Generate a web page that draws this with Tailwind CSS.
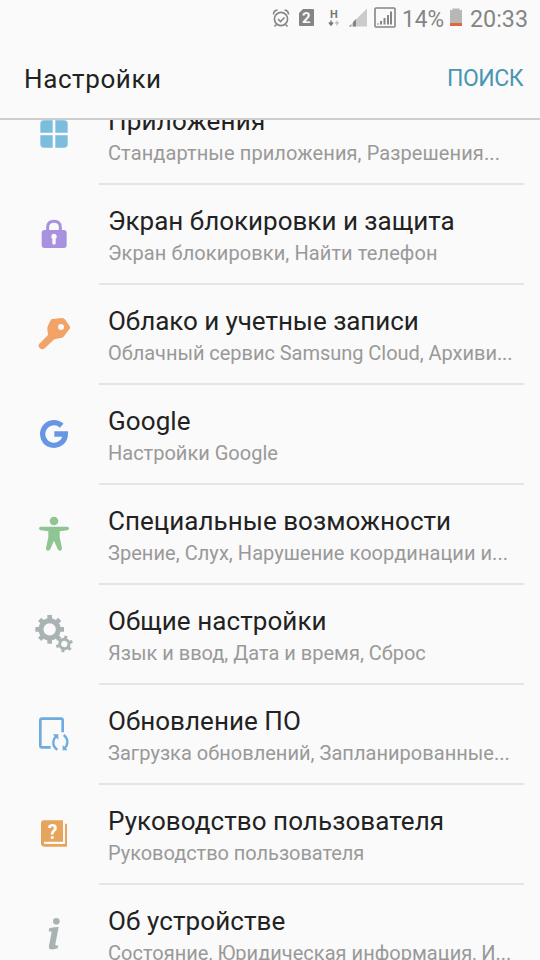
<!DOCTYPE html>
<html lang="ru">
<head>
<meta charset="utf-8">
<title>Настройки</title>
<script src="https://cdn.jsdelivr.net/npm/@tailwindcss/browser@4"></script>
</head>
<body class="flex h-[960px] w-[540px] flex-col overflow-hidden bg-[#fafafa] font-[Roboto,sans-serif] text-[#222]">
<div class="h-10 shrink-0">
<svg class="block h-10 w-[540px]" viewBox="0 0 540 40" fill="none">
  <g stroke="#858585" stroke-width="1.6"><circle cx="281" cy="19" r="6.6"/><path d="M278 19l2.5 2.5 4-4M276.5 24.5l-2 2M285.500 24.500l2 2M273.500 14.500q0-4 4-4.500M288.500 14.500q0-4-4-4.500"/></g>
  <path d="M303 9h10q1 0 1 1v15q0 1-1 1h-13q-1 0-1-1V13z" fill="#858585"/>
  <text x="302" y="23" font-size="15" font-weight="700" fill="#fafafa">2</text>
  <text x="330" y="17.500" font-size="11" font-weight="700" fill="#777">H</text>
  <path d="M331 20.500v3.500M329 22.500l2 2.500 2-2.500" stroke="#777" stroke-width="1.500"/>
  <path d="M337 25.500V22M335.300 23.500l1.700-2 1.700 2" stroke="#c4c4c4" stroke-width="1.300"/>
  <path d="M349 26.500L367 8.500v18z" fill="#cbcbcb"/><path d="M349 26.500l2-2v2zM353 26.500v-4.500l3-3v7.500z" fill="#858585"/>
  <rect x="375" y="8" width="20" height="19" rx="1" stroke="#858585" stroke-width="1.600"/>
  <path d="M378 24.500v-1M381 24.500v-3.500M384.500 24.500V18M388 24.500V15M391 24.500V11.500" stroke="#858585" stroke-width="2"/>
  <text x="402" y="27" font-size="24" fill="#858585" textLength="42" lengthAdjust="spacingAndGlyphs">14%</text>
  <path d="M450 10h2.500V8.500h7V10h2.500v16h-12z" fill="#b7b7b7"/><path d="M450 23h12v3h-12z" fill="#e2673f"/>
  <text x="470" y="27" font-size="24" fill="#858585" textLength="58" lengthAdjust="spacingAndGlyphs">20:33</text>
</svg>
</div>
<header class="flex h-20 shrink-0 items-center justify-between border-b-2 border-[#cecece] pr-[17px] pl-6">
  <h1 class="text-[26px] leading-[30px] tracking-[0.6px]">Настройки</h1>
  <button class="text-[23px] leading-[30px] tracking-[-0.5px] text-[#4896b3]">ПОИСК</button>
</header>
<main class="min-h-0 grow overflow-hidden">
<div class="-mt-[35px]">
  <section class="flex h-[100px] pl-6">
    <svg class="mt-[25px] h-[50px] w-[60px] shrink-0" viewBox="0 0 180 150" fill="#7cbcdd"><path d="M60 31h26v37H49V42q0-11 11-11zM94 31h26q11 0 11 11v26H94zM49 76h37v37H60q-11 0-11-11zM94 76h37v26q0 11-11 11H94z"/></svg>
    <div class="ml-[15px] w-[425px] border-b-2 border-[#e4e4e4] pt-5 pl-[9px]"><h2 class="text-[26px] leading-8 tracking-[0.2px] whitespace-nowrap">Приложения</h2><p class="text-[20px] leading-8 tracking-[0.1px] whitespace-nowrap text-[#999]">Стандартные приложения, Разрешения...</p></div>
  </section>
  <section class="flex h-[100px] pl-6">
    <svg class="mt-[25px] h-[50px] w-[60px] shrink-0" viewBox="0 0 180 150"><path d="M71 62V52q0-18 19-18t19 18v10" fill="none" stroke="#a891df" stroke-width="9"/><rect x="53" y="60" width="75" height="54" rx="9" fill="#a891df"/><path d="M90 71a9 9 0 0 1 5 16v14q-5 5-10 0V87a9 9 0 0 1 5-16" fill="#fafafa"/></svg>
    <div class="ml-[15px] w-[425px] border-b-2 border-[#e4e4e4] pt-5 pl-[9px]"><h2 class="text-[26px] leading-8 whitespace-nowrap">Экран блокировки и защита</h2><p class="text-[20px] leading-8 tracking-[0.1px] whitespace-nowrap text-[#999]">Экран блокировки, Найти телефон</p></div>
  </section>
  <section class="flex h-[100px] pl-6">
    <svg class="mt-[25px] h-[50px] w-[60px] shrink-0" viewBox="0 0 180 150"><path fill="#f2a368" fill-rule="evenodd" d="M85 27L113 24Q121 24 124 29L137 49Q140 54 136 58L118 81Q114 85 109 84L91 88L62 115Q55 121 48 115Q40 108 46 101L72 75L70 57Q69 52 72 47L79 32Q81 28 85 27ZM111 42a9 9 0 1 0 0 18a9 9 0 1 0 0-18z"/></svg>
    <div class="ml-[15px] w-[425px] border-b-2 border-[#e4e4e4] pt-5 pl-[9px]"><h2 class="text-[26px] leading-8 tracking-[-0.05px] whitespace-nowrap">Облако и учетные записи</h2><p class="text-[20px] leading-8 tracking-[-0.04px] whitespace-nowrap text-[#999]">Облачный сервис Samsung Cloud, Архиви...</p></div>
  </section>
  <section class="flex h-[100px] pl-6">
    <svg class="mt-[25px] h-[50px] w-[60px] shrink-0" viewBox="0 0 180 150"><path d="M113 47A34 34 0 1 0 124 72H91" fill="none" stroke="#6796e4" stroke-width="16"/></svg>
    <div class="ml-[15px] w-[425px] border-b-2 border-[#e4e4e4] pt-5 pl-[9px]"><h2 class="text-[26px] leading-8 tracking-[0.1px] whitespace-nowrap">Google</h2><p class="text-[20px] leading-8 whitespace-nowrap text-[#999]">Настройки Google</p></div>
  </section>
  <section class="flex h-[100px] pl-6">
    <svg class="mt-[25px] h-[50px] w-[60px] shrink-0" viewBox="0 0 180 150" fill="#8fc593"><circle cx="90" cy="33" r="13"/><path d="M50 50H130Q135 50 135 55.500T130 61L107 64V82L114 114Q115 121 109 122Q104 123 101 117L90 92L79 117Q76 123 71 122Q65 121 66 114L73 82V64L50 61Q45 60 45 55T50 50Z"/></svg>
    <div class="ml-[15px] w-[425px] border-b-2 border-[#e4e4e4] pt-5 pl-[9px]"><h2 class="text-[26px] leading-8 tracking-[0.03px] whitespace-nowrap">Специальные возможности</h2><p class="text-[20px] leading-8 tracking-[0.05px] whitespace-nowrap text-[#999]">Зрение, Слух, Нарушение координации и...</p></div>
  </section>
  <section class="flex h-[100px] pl-6">
    <svg class="mt-[25px] h-[50px] w-[60px] shrink-0" viewBox="0 0 180 150" fill="none" stroke="#a9b3b3">
      <g transform="translate(77 58)"><circle r="26" stroke-width="15"/><path stroke-width="14" d="M0-30V-43M0 30V43M-30 0H-43M30 0H43M-21-21L-30-30M21-21L30-30M-21 21L-30 30M21 21L30 30"/></g>
      <g transform="translate(121 102) rotate(12)"><circle r="14" stroke-width="9"/><path stroke-width="9" d="M0-16V-25M0 16V25M-14-8L-22-12.500M14-8L22-12.500M-14 8L-22 12.500M14 8L22 12.500"/></g>
    </svg>
    <div class="ml-[15px] w-[425px] border-b-2 border-[#e4e4e4] pt-5 pl-[9px]"><h2 class="text-[26px] leading-8 tracking-[0.07px] whitespace-nowrap">Общие настройки</h2><p class="text-[20px] leading-8 whitespace-nowrap text-[#999]">Язык и ввод, Дата и время, Сброс</p></div>
  </section>
  <section class="flex h-[100px] pl-6">
    <svg class="mt-[25px] h-[50px] w-[60px] shrink-0" viewBox="0 0 180 150" fill="none" stroke="#6eace0"><path d="M80 112H54Q49 112 49 107V31Q49 26 54 26H111Q116 26 116 31V67" stroke-width="8"/><path d="M100 119Q87 111 88 96Q89 83 99 77M119 75Q131 84 130 98Q129 111 119 116" stroke-width="7"/><path d="M86 73H103V89ZM116 105V121H131Z" fill="#6eace0" stroke="none"/></svg>
    <div class="ml-[15px] w-[425px] border-b-2 border-[#e4e4e4] pt-5 pl-[9px]"><h2 class="text-[26px] leading-8 tracking-[0.05px] whitespace-nowrap">Обновление ПО</h2><p class="text-[20px] leading-8 tracking-[0.03px] whitespace-nowrap text-[#999]">Загрузка обновлений, Запланированные...</p></div>
  </section>
  <section class="flex h-[100px] pl-6">
    <svg class="mt-[25px] h-[50px] w-[60px] shrink-0" viewBox="0 0 180 150" fill="#e6a45d"><path d="M61 31H117V96H62V102H122V41H129V110H61Q51 110 51 100V41Q51 31 61 31Z"/><path d="M60 98H120V41" fill="none" stroke="#fafafa" stroke-width="6"/><text x="71" y="87" font-size="59" font-weight="700" fill="#fff" textLength="29" lengthAdjust="spacingAndGlyphs">?</text></svg>
    <div class="ml-[15px] w-[425px] border-b-2 border-[#e4e4e4] pt-5 pl-[9px]"><h2 class="text-[26px] leading-8 tracking-[0.07px] whitespace-nowrap">Руководство пользователя</h2><p class="text-[20px] leading-8 tracking-[-0.04px] whitespace-nowrap text-[#999]">Руководство пользователя</p></div>
  </section>
  <section class="flex h-[100px] pl-6">
    <svg class="mt-[25px] h-[50px] w-[60px] shrink-0" viewBox="0 0 180 150" fill="#a9b3b3"><circle cx="97" cy="34" r="10"/><path d="M76 55Q89 51 104 51L94 103Q93 108 103 106L101 115Q91 119 80 118Q73 117 75 107L83 65L74 64Z"/></svg>
    <div class="ml-[15px] w-[425px] pt-5 pl-[9px]"><h2 class="text-[26px] leading-8 tracking-[0.1px] whitespace-nowrap">Об устройстве</h2><p class="text-[20px] leading-8 tracking-[0.03px] whitespace-nowrap text-[#999]">Состояние, Юридическая информация, И...</p></div>
  </section>
</div>
</main>
</body>
</html>
